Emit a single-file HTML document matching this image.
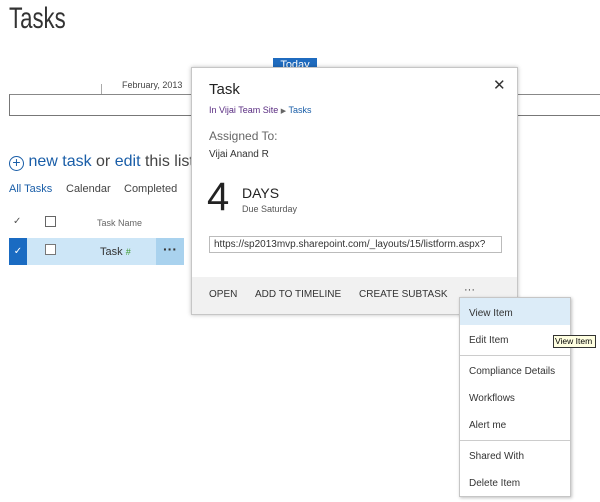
<!DOCTYPE html>
<html><head><meta charset="utf-8"><style>
*{margin:0;padding:0;box-sizing:border-box}
body{width:600px;height:502px;background:#fff;font-family:"Segoe UI","Liberation Sans",sans-serif;position:relative;overflow:hidden;color:#333}
.a{position:absolute;white-space:nowrap}
</style></head><body>
<div class="a" style="left:9px;top:2px;font-size:30px;color:#333;transform:scaleX(0.74);transform-origin:left top">Tasks</div>
<div class="a" style="left:273px;top:58px;width:44px;height:14px;background:#1f6bbf;color:#fff;font-size:11px;text-align:center;line-height:14px">Today</div>
<div class="a" style="left:101px;top:84px;width:1px;height:10px;background:#aaa"></div>
<div class="a" style="left:122px;top:80px;font-size:9px;color:#444">February, 2013</div>
<div class="a" style="left:9px;top:94px;width:600px;height:22px;border:1px solid #777;border-right:none;border-top:1px solid #888"></div>
<div class="a" style="left:9px;top:153px;font-size:16px;color:#1a5ea8"><span style="display:inline-block;width:15px;height:15px;border:1.5px solid #1a5ea8;border-radius:50%;text-align:center;line-height:11px;font-size:14px;vertical-align:-1px">+</span> new task <span style="color:#444">or</span> edit <span style="color:#444">this list</span></div>
<div class="a" style="left:9px;top:183px;font-size:11px;color:#1a5ea8">All Tasks</div>
<div class="a" style="left:66px;top:183px;font-size:11px;color:#444">Calendar</div>
<div class="a" style="left:124px;top:183px;font-size:11px;color:#444">Completed</div>
<div class="a" style="left:13px;top:216px;font-size:10px;color:#555">✓</div>
<div class="a" style="left:45px;top:216px;width:11px;height:11px;border:1px solid #666"></div>
<div class="a" style="left:97px;top:218px;font-size:9px;color:#666">Task Name</div>
<div class="a" style="left:9px;top:238px;width:18px;height:27px;background:#1a6bc2;color:#fff;font-size:10px;text-align:center;line-height:27px">✓</div>
<div class="a" style="left:27px;top:238px;width:129px;height:27px;background:#cde6f7"></div>
<div class="a" style="left:45px;top:244px;width:11px;height:11px;border:1px solid #777;background:#fff"></div>
<div class="a" style="left:100px;top:246px;font-size:11px;color:#333">Task <span style="color:#3a9a2a;font-size:9px">#</span></div>
<div class="a" style="left:156px;top:238px;width:28px;height:27px;background:#a9d2ee;text-align:center;font-size:14px;font-weight:bold;line-height:22px;color:#333">···</div>
<div class="a" style="left:191px;top:67px;width:327px;height:248px;background:#fff;border:1px solid #c6c6c6;box-shadow:0 0 4px rgba(0,0,0,.25)">
 <div class="a" style="left:0;top:209px;width:325px;height:37px;background:#f1f1f1"></div>
 <div class="a" style="left:17px;top:13px;font-size:15px;color:#222">Task</div>
 <div class="a" style="left:301px;top:8px;font-size:15px;color:#333">✕</div>
 <div class="a" style="left:17px;top:37px;font-size:9px;color:#5a2d82">In Vijai Team Site <span style="color:#666;font-size:7px">▶</span> <span style="color:#1a5ea8">Tasks</span></div>
 <div class="a" style="left:17px;top:61px;font-size:12px;color:#666">Assigned To:</div>
 <div class="a" style="left:17px;top:81px;font-size:10px;color:#333">Vijai Anand R</div>
 <div class="a" style="left:15px;top:106px;font-size:40px;font-weight:300;color:#222;line-height:46px">4</div>
 <div class="a" style="left:50px;top:117px;font-size:14px;color:#222">DAYS</div>
 <div class="a" style="left:50px;top:136px;font-size:9px;color:#555">Due Saturday</div>
 <div class="a" style="left:17px;top:168px;width:293px;height:17px;border:1px solid #bbb;font-size:10px;line-height:15px;padding-left:4px;color:#333;overflow:hidden">https://sp2013mvp.sharepoint.com/_layouts/15/listform.aspx?</div>
 <div class="a" style="left:17px;top:221px;font-size:10px;color:#333">OPEN</div>
 <div class="a" style="left:63px;top:221px;font-size:10px;color:#333">ADD TO TIMELINE</div>
 <div class="a" style="left:167px;top:221px;font-size:10px;color:#333">CREATE SUBTASK</div>
 <div class="a" style="left:272px;top:216px;font-size:11px;color:#333">···</div>
</div>
<div class="a" style="left:459px;top:297px;width:112px;height:200px;background:#fff;border:1px solid #c6c6c6;box-shadow:1px 1px 3px rgba(0,0,0,.25);font-size:10px;color:#333">
 <div class="a" style="left:0;top:0;width:110px;height:27px;background:#dcecf8"></div>
 <div class="a" style="left:9px;top:10px">View Item</div>
 <div class="a" style="left:9px;top:37px">Edit Item</div>
 <div class="a" style="left:0;top:57px;width:110px;height:1px;background:#ccc"></div>
 <div class="a" style="left:9px;top:68px">Compliance Details</div>
 <div class="a" style="left:9px;top:95px">Workflows</div>
 <div class="a" style="left:9px;top:122px">Alert me</div>
 <div class="a" style="left:0;top:142px;width:110px;height:1px;background:#ccc"></div>
 <div class="a" style="left:9px;top:153px">Shared With</div>
 <div class="a" style="left:9px;top:180px">Delete Item</div>
</div>
<div class="a" style="left:553px;top:335px;width:43px;height:13px;background:#ffffe1;border:1px solid #333;font-size:8.5px;line-height:11px;padding-left:1px;color:#000">View Item</div>
</body></html>
